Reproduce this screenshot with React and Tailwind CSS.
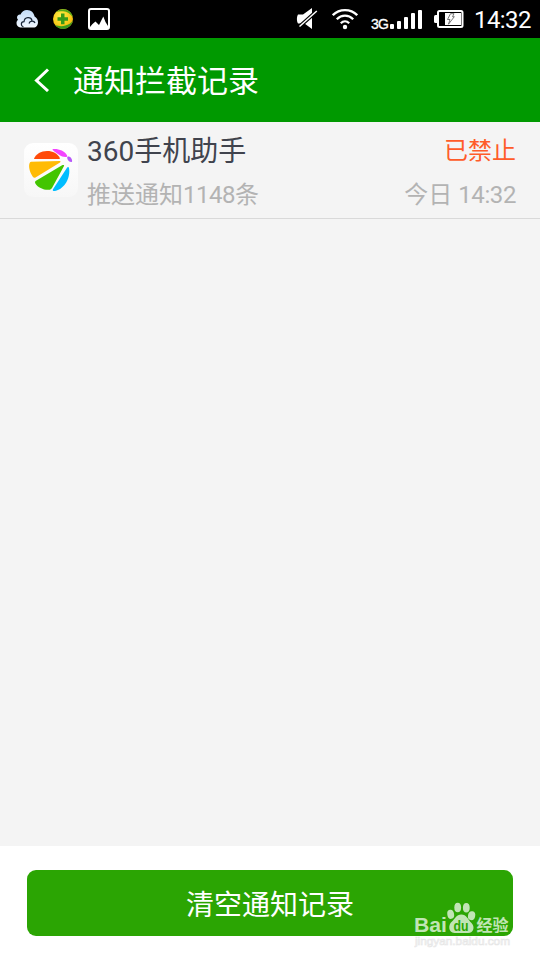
import React from 'react';

const FONT = "font-[Roboto,'Noto_Sans_CJK_SC',sans-serif]";

function CloudIcon() {
  return (
    <svg className="w-[22px] h-5" viewBox="0 0 22 20">
      <defs>
        <linearGradient id="cloud" x1="0" y1="0" x2="0" y2="1">
          <stop offset="0" stopColor="#c3dcf8" />
          <stop offset="1" stopColor="#f2f8ff" />
        </linearGradient>
      </defs>
      <path
        d="M6 18.500H4.500C2 18 .5 16.500 .5 14c0-1.500.5-2.500 1.500-3.300C.8 9.500 .6 7.500 2 6.200 2.600 5.600 3.600 5.300 4.500 5.600 5.500 2.800 8 1 11 1c4 0 7 2.800 7.600 6.500C20.500 8.500 22 10.500 22 13.200c0 3-1.800 5.300-4.500 5.300z"
        fill="url(#cloud)"
      />
      <path
        d="M7.500 18C4.500 17 4.500 13 8 12.700 8.500 7.500 15 7.500 16 11.500M13 14.500c.8-3 5-3.300 6-.5"
        fill="none"
        stroke="#172436"
        strokeWidth="1.200"
      />
    </svg>
  );
}

function ShieldIcon() {
  return (
    <svg className="w-5 h-5" viewBox="0 0 20 20">
      <defs>
        <radialGradient id="ball" cx=".4" cy=".35" r=".7">
          <stop offset="0" stopColor="#fff04a" />
          <stop offset=".7" stopColor="#f8c916" />
          <stop offset="1" stopColor="#e8a00c" />
        </radialGradient>
      </defs>
      <circle cx="10" cy="10" r="10" fill="url(#ball)" />
      <path d="M3 3C6 0 12-1 16 2c2.500 2 3.500 4 3.900 6.500C17.500 5 14 2.500 10 2.300 7 2 5 2.300 3 3z" fill="#57a91a" />
      <path d="M19.800 11.500C19 17 14 20 10 20c-3.500 0-6.500-1.500-8.300-4.200 4 1.700 7.500 1.700 10.600.8 3.300-.8 6-2.300 7.500-5.100z" fill="#3e9a1d" />
      <path d="M8 4.500h3.500v3.700h3.500v3.500h-3.500v3.500H8v-3.500H4.500V8.200H8z" fill="#389b18" />
    </svg>
  );
}

function PictureIcon() {
  return (
    <svg className="w-[22px] h-[22px]" viewBox="0 0 22 22">
      <rect x="1" y="1" width="20" height="20" rx="2" fill="none" stroke="#fff" strokeWidth="2" />
      <path d="M2 21v-2L4.500 16l3-2.500L11 17l4.300-8.500L17.500 14l2.500 4v3z" fill="#fff" />
    </svg>
  );
}

function MuteIcon() {
  return (
    <svg className="w-[22px] h-[22px]" viewBox="0 0 22 22">
      <path d="M2 6.500h5L16 0v21L8.500 15.500H2c-1.400-2-1.400-7 0-9z" fill="#fff" />
      <path d="M2 19.800L21 2.800" stroke="#000" strokeWidth="3.800" />
      <path d="M3.500 18.500L20.800 3" stroke="#fff" strokeWidth="1.500" />
    </svg>
  );
}

function WifiIcon() {
  return (
    <svg className="w-[26px] h-[22px]" viewBox="0 0 26 22">
      <g fill="none" stroke="#fff" strokeWidth="2.300">
        <path d="M.8 7.200C7.500 .3 18.500 .3 25.200 7.200" />
        <path d="M4.800 11.200C9.500 6.500 16.500 6.500 21.200 11.200" />
        <path d="M8.800 15.200C11.300 12.700 14.700 12.700 17.200 15.200" />
      </g>
      <circle cx="13" cy="19" r="2.200" fill="#fff" />
    </svg>
  );
}

function SignalBars() {
  return (
    <div className="flex items-end gap-[3px] ml-[3px]">
      <span className="w-1 h-[5px] rounded-[1px] bg-white" />
      <span className="w-1 h-2 rounded-[1px] bg-white" />
      <span className="w-1 h-3 rounded-[1px] bg-white" />
      <span className="w-1 h-4 rounded-[1px] bg-white" />
      <span className="w-1 h-[19px] rounded-[1px] bg-white" />
    </div>
  );
}

function BatteryIcon() {
  return (
    <svg className="w-[30px] h-[18px]" viewBox="0 0 30 18">
      <rect x="0" y="5" width="5" height="8" rx="1.500" fill="#fff" />
      <rect x="4" y="1" width="24.500" height="16" rx="1.500" fill="none" stroke="#fff" strokeWidth="2" />
      <rect x="11" y="3" width="16" height="12" fill="#fff" />
      <path d="M16.500 3.700h3.500l-1.500 3h1.800l-5.800 7.500 1.500-4.700h-2.500z" fill="#fff" stroke="#555" strokeWidth=".8" />
    </svg>
  );
}

function StatusBar() {
  return (
    <div className="h-[38px] flex items-center bg-black pl-4 pr-[9px] text-white">
      <CloudIcon />
      <div className="ml-[15px]"><ShieldIcon /></div>
      <div className="ml-[15px]"><PictureIcon /></div>
      <div className="ml-auto"><MuteIcon /></div>
      <div className="ml-[14px]"><WifiIcon /></div>
      <div className="ml-[13px] h-[19px] flex items-end">
        <span className="w-4 text-[14px] leading-[10px] tracking-[-0.9px] font-['Liberation_Sans',sans-serif] [-webkit-text-stroke:0.3px_white]">3G</span>
        <SignalBars />
      </div>
      <div className="ml-3"><BatteryIcon /></div>
      <span className="ml-[10px] w-[57px] text-2xl leading-[38px] tracking-[-0.6px] whitespace-nowrap pt-px">14:32</span>
    </div>
  );
}

function AppLogo() {
  return (
    <svg className="w-[54px] h-[54px]" viewBox="0 0 54 54">
      <defs>
        <linearGradient id="tile" x1="0" y1="0" x2="0" y2="1">
          <stop offset="0" stopColor="#fff" />
          <stop offset="1" stopColor="#f7f7f7" />
        </linearGradient>
      </defs>
      <rect width="54" height="54" rx="9" fill="url(#tile)" />
      <path d="M10 15.600C12 11 17 8 23 8c6 0 10.500 2.500 12.700 6.700.3.700 0 1.300-.7 1.300H10.500c-.4 0-.6-.1-.5-.4z" fill="#ff4b0a" />
      <path d="M7.300 18.800L35.700 18.100c.9 0 1.200.8.300 1.300L11.500 34.500c-1 .6-2 .2-2.700-.8C5.500 29 4.200 22.800 5.800 19.800c.3-.7.800-1 1.500-1z" fill="#ffbb05" />
      <path d="M38.500 22.100c1-.6 2 .1 1.500 1L28 45c-.5.900-1.200 1.500-2.200 1.700-5.600.8-11.800-2.200-14.300-6-.8-1.200-.6-2.300.5-3z" fill="#43c500" />
      <path d="M43 24.800c.6-1 1.800-.9 2 .2C46.800 34 41 46 31 48c-1.500.4-2.700-.4-2-1.800z" fill="#00bdff" />
      <path d="M29 6c5-.6 11.500 1.500 14 6.200.6 1.300-.2 2-1.500 1.800C37 13.700 33 10.500 29.300 7.400c-.9-.6-1-1.300-.3-1.400z" fill="#f342ff" />
      <path d="M43.800 13.600c2.500-.3 4.400 2.200 4.300 4.600-.2 1.500-3 .9-4.200-1.100-.8-1.500-1.100-3.200-.1-3.500z" fill="#b758fa" />
    </svg>
  );
}

function RecordRow({ name, count, status, time }) {
  return (
    <div className="h-[97px] border-b border-[#d9d9d9] pl-6 pr-6 flex">
      <div className="mt-[21px] shrink-0"><AppLogo /></div>
      <div className="ml-[9px] mt-px flex-1 flex flex-col">
        <div className="h-14 flex items-center justify-between">
          <span className="pt-px text-[28px] text-[#40434d]">{name}</span>
          <span className="text-2xl text-[#ff5c29]">{status}</span>
        </div>
        <div className="h-8 flex items-center justify-between text-2xl text-[#b3b3b3]">
          <span>推送通知<span className="tracking-[-0.5px]">{count}</span>条</span>
          <span>今日 <span className="tracking-[-0.4px]">{time}</span></span>
        </div>
      </div>
    </div>
  );
}

function Watermark() {
  return (
    <div className="absolute left-[414px] top-[902px] w-[100px] h-[46px] font-['Liberation_Sans','Noto_Sans_CJK_SC',sans-serif]">
      <svg className="w-[100px] h-[46px]" viewBox="0 0 100 46">
        <g fill="#c1e5b5">
          <ellipse cx="36.700" cy="12.300" rx="3.400" ry="4.600" transform="rotate(-10 36.700 12.300)" />
          <ellipse cx="43.700" cy="5.500" rx="3.400" ry="4.700" />
          <ellipse cx="52.300" cy="5.700" rx="3.400" ry="4.700" />
          <ellipse cx="57.600" cy="13.700" rx="3.600" ry="4.500" transform="rotate(12 57.600 13.700)" />
          <path d="M47.300 12.500c-5 0-6.300 4.500-9.300 7-4 3-4 11 2.500 11.500H54c6 0 7-6.500 3.500-10-3.500-3.500-5-8.500-10.200-8.500z" />
        </g>
        <g fontWeight="700">
          <text x="0" y="30" fontSize="21" textLength="33" lengthAdjust="spacingAndGlyphs" fill="#c1e5b5">Bai</text>
          <text x="39.500" y="28.500" fontSize="14" textLength="15" lengthAdjust="spacingAndGlyphs" fill="#2ba503">du</text>
          <text x="62.500" y="28.500" fontSize="16" fill="#c1e5b5">经验</text>
        </g>
        <text x="1" y="42.500" fontSize="10" textLength="95" lengthAdjust="spacingAndGlyphs" fill="#fff" stroke="#e6e6e6" strokeWidth=".6">jingyan.baidu.com</text>
      </svg>
    </div>
  );
}

export default function App() {
  return (
    <div className={`relative w-[540px] h-[960px] overflow-hidden flex flex-col bg-[#f4f4f4] ${FONT}`}>
      <StatusBar />

      <header className="h-[84px] shrink-0 bg-[#009900] flex items-center text-white">
        <svg className="w-4 h-6 ml-[34px]" viewBox="0 0 16 24">
          <path d="M14 1.500L2.500 12.500L14 23" fill="none" stroke="#fff" strokeWidth="3" />
        </svg>
        <h1 className="ml-[23px] pt-[3px] text-[31px] leading-[84px]">通知拦截记录</h1>
      </header>

      <main className="flex-1">
        <RecordRow name="360手机助手" count={1148} status="已禁止" time="14:32" />
      </main>

      <footer className="h-[114px] shrink-0 bg-white px-[27px] pt-6">
        <button type="button" className="w-full h-[66px] pt-[5px] rounded-[9px] bg-[#2ba503] text-white text-[28px]">
          清空通知记录
        </button>
      </footer>

      <Watermark />
    </div>
  );
}
